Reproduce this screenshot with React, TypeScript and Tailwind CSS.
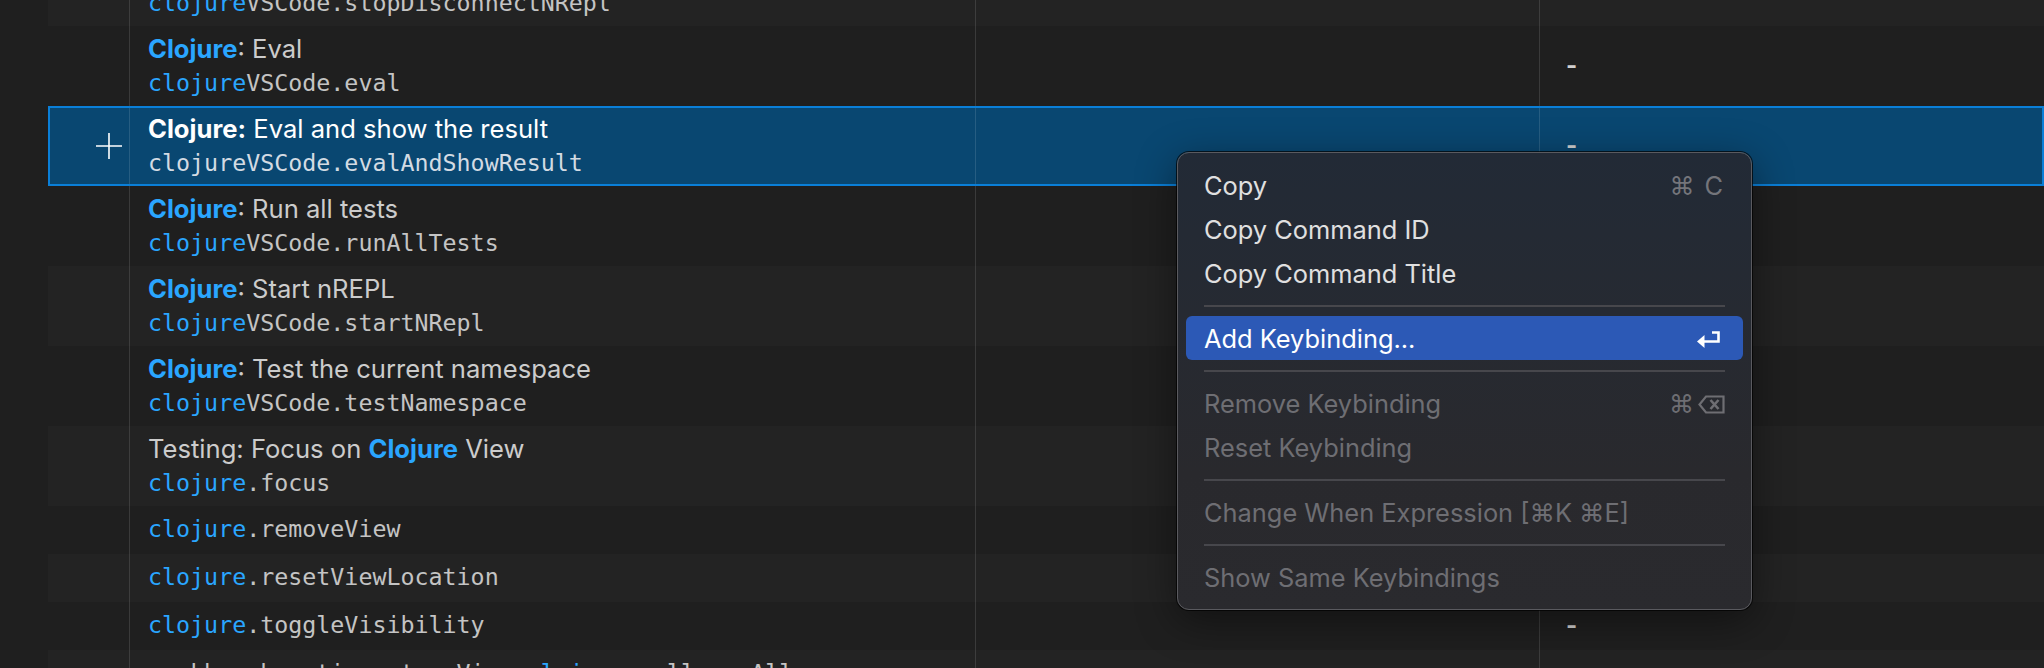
import React from "react"

type TitleProps = {
    before?: string
    hl: string
    after: string
    selected?: boolean
}

function Title({ before, hl, after, selected }: TitleProps) {
    if (selected) {
        return (
            <div className="h-[34px] leading-[34px] text-[25.6px] text-white whitespace-nowrap">
                <span className="font-bold">{hl}:</span>
                <span>{after}</span>
            </div>
        )
    }
    return (
        <div className="h-[34px] leading-[34px] text-[25.6px] text-[#cccccc] whitespace-nowrap">
            {before}
            <span className="font-bold text-[#2aa6ff]">{hl}</span>
            {after}
        </div>
    )
}

function Mono({ hl, rest, selected }: { hl: string; rest: string; selected?: boolean }) {
    return (
        <div className="h-[34px] leading-[34px] font-['DejaVu_Sans_Mono',monospace] text-[23.3px] whitespace-nowrap">
            <span className={selected ? "text-[#d3dbe3]" : "text-[#2aa6ff]"}>{hl}</span>
            <span className={selected ? "text-[#d3dbe3]" : "text-[#c4c4c4]"}>{rest}</span>
        </div>
    )
}

type RowProps = {
    stripe?: boolean
    selected?: boolean
    single?: boolean
    when?: boolean
    children: React.ReactNode
}

function Row({ stripe, selected, single, when, children }: RowProps) {
    return (
        <div
            className={`relative flex ${single ? "h-[48px]" : "h-[80px]"} ${
                selected
                    ? "bg-[#094771] after:pointer-events-none after:absolute after:inset-0 after:border-2 after:border-[#0a7fd8] after:content-['']"
                    : stripe
                    ? "bg-[#232323]"
                    : "bg-[#1f1f1f]"
            }`}
        >
            <div className="w-[82px] shrink-0 border-r border-white/[0.12] flex items-center justify-end pr-[7px]">
                {selected && (
                    <svg width="26" height="26" viewBox="0 0 26 26">
                        <path d="M13 0 V26 M0 13 H26" stroke="#ffffff" strokeWidth="1.6" />
                    </svg>
                )}
            </div>
            <div className="w-[846px] shrink-0 border-r border-white/[0.12] pl-[18px] pt-[6px] flex flex-col">
                {children}
            </div>
            <div className="w-[564px] shrink-0 border-r border-white/[0.12]"></div>
            <div className="flex-1 pl-[26px] flex items-center text-[24px] font-bold text-[#d0d0d0]">
                {when ? "-" : ""}
            </div>
        </div>
    )
}

function MenuItem({ label, shortcut, active, disabled }: { label: string; shortcut?: React.ReactNode; active?: boolean; disabled?: boolean }) {
    return (
        <div
            className={`flex h-[44px] items-center justify-between rounded-[6px] pl-[18px] pr-[20px] pt-[3px] text-[25.4px] ${
                active ? "bg-[#2c59b6] text-white" : disabled ? "text-[#6e6e73]" : "text-[#e0e0e0]"
            }`}
        >
            <span>{label}</span>
            {shortcut}
        </div>
    )
}

function Separator() {
    return (
        <div className="h-[21px] flex items-center px-[18px]">
            <div className="h-[2px] w-full bg-[#47474c]"></div>
        </div>
    )
}

export default function App() {
    return (
        <div className="relative w-[2044px] h-[668px] overflow-hidden bg-[#1f1f1f] font-['Inter','Liberation_Sans','DejaVu_Sans',sans-serif]">
            <div className="pl-[48px] mt-[-54px] flex flex-col">
                <Row stripe>
                    <Title hl="Clojure" after=": Disconnect from nREPL" />
                    <Mono hl="clojure" rest="VSCode.stopDisconnectNRepl" />
                </Row>
                <Row when>
                    <Title hl="Clojure" after=": Eval" />
                    <Mono hl="clojure" rest="VSCode.eval" />
                </Row>
                <Row selected when>
                    <Title hl="Clojure" after=" Eval and show the result" selected />
                    <Mono hl="clojure" rest="VSCode.evalAndShowResult" selected />
                </Row>
                <Row>
                    <Title hl="Clojure" after=": Run all tests" />
                    <Mono hl="clojure" rest="VSCode.runAllTests" />
                </Row>
                <Row stripe>
                    <Title hl="Clojure" after=": Start nREPL" />
                    <Mono hl="clojure" rest="VSCode.startNRepl" />
                </Row>
                <Row>
                    <Title hl="Clojure" after=": Test the current namespace" />
                    <Mono hl="clojure" rest="VSCode.testNamespace" />
                </Row>
                <Row stripe>
                    <Title before="Testing: Focus on " hl="Clojure" after=" View" />
                    <Mono hl="clojure" rest=".focus" />
                </Row>
                <Row single>
                    <Mono hl="clojure" rest=".removeView" />
                </Row>
                <Row single stripe>
                    <Mono hl="clojure" rest=".resetViewLocation" />
                </Row>
                <Row single when>
                    <Mono hl="clojure" rest=".toggleVisibility" />
                </Row>
                <Row single stripe when>
                    <div className="h-[34px] leading-[34px] font-['DejaVu_Sans_Mono',monospace] text-[23.3px] whitespace-nowrap text-[#c4c4c4]">
                        workbench.actions.treeView.<span className="text-[#2aa6ff]">clojure</span>.collapseAll
                    </div>
                </Row>
            </div>

            {/* context menu */}
            <div className="absolute left-[1177px] top-[152px] w-[575px] rounded-[12px] border border-[#5a5a5f] px-[8px] py-[10px] bg-[linear-gradient(180deg,#222a36_0%,#262a32_35%,#29292d_70%,#2a2a2e_100%)] shadow-[0_0_0_1px_rgba(0,0,0,0.7),0_10px_40px_rgba(0,0,0,0.45)]">
                <MenuItem
                    label="Copy"
                    shortcut={
                        <span className="flex items-center gap-[10px] text-[#74757b]">
                            <span className="font-['DejaVu_Sans'] text-[25px]">⌘</span>
                            <span>C</span>
                        </span>
                    }
                />
                <MenuItem label="Copy Command ID" />
                <MenuItem label="Copy Command Title" />
                <Separator />
                <MenuItem
                    label="Add Keybinding..."
                    active
                    shortcut={
                        <svg width="25" height="20" viewBox="0 0 25 20" className="mr-[2px]">
                            <path d="M16 2.5 H22.5 V11.5 H7" stroke="#ffffff" strokeWidth="2.6" fill="none" />
                            <polygon points="8.5,5 1,11.5 8.5,18" fill="#ffffff" />
                        </svg>
                    }
                />
                <Separator />
                <MenuItem
                    label="Remove Keybinding"
                    disabled
                    shortcut={
                        <span className="flex items-center gap-[4px] text-[#6e6e73] mr-[-2px]">
                            <span className="font-['DejaVu_Sans'] text-[25px]">⌘</span>
                            <svg width="27" height="19" viewBox="0 0 27 19">
                                <path d="M8 1.5 H25.5 V17.5 H8 L1.5 9.5 Z" stroke="#6e6e73" strokeWidth="2.2" fill="none" />
                                <path d="M12.5 5 L20.5 14 M20.5 5 L12.5 14" stroke="#6e6e73" strokeWidth="2.6" />
                            </svg>
                        </span>
                    }
                />
                <MenuItem label="Reset Keybinding" disabled />
                <Separator />
                <MenuItem label="Change When Expression [⌘K ⌘E]" disabled />
                <Separator />
                <MenuItem label="Show Same Keybindings" disabled />
            </div>
        </div>
    )
}
